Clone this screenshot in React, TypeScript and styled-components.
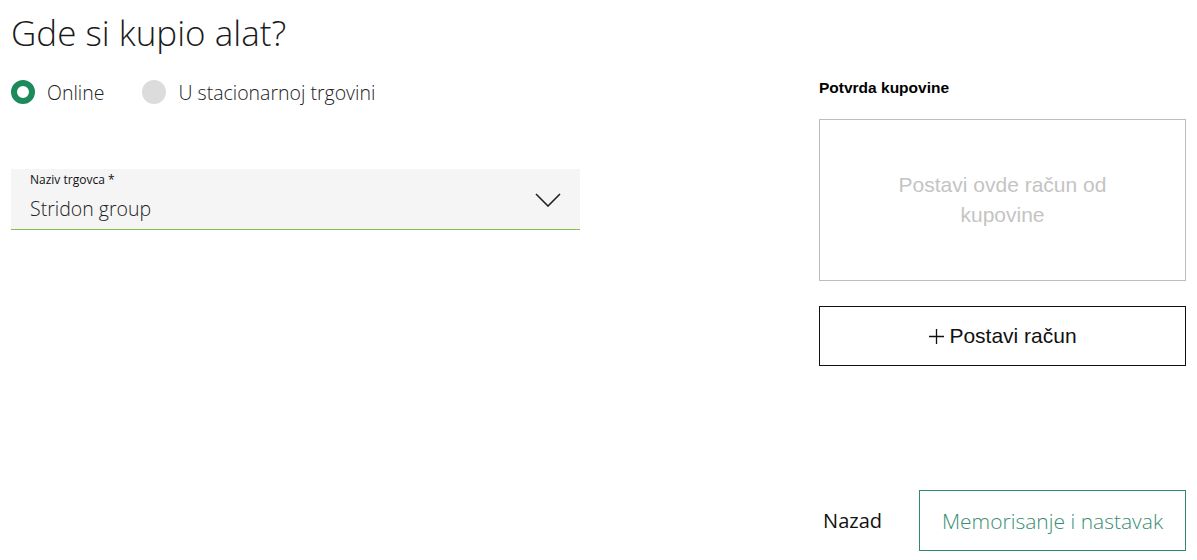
import styled, { createGlobalStyle } from 'styled-components';

const GlobalStyle = createGlobalStyle`
  html, body {
    margin: 0;
    padding: 0;
    background: #fff;
  }
  body {
    font-family: "Open Sans", "Noto Sans", sans-serif;
    color: #000;
  }
  * {
    box-sizing: border-box;
  }
`;

const Page = styled.div`
  display: flex;
  justify-content: space-between;
  height: 560px;
  padding: 0 11px 9px 11px;
`;

const LeftColumn = styled.section`
  display: flex;
  flex-direction: column;
  width: 569px;
`;

const RightColumn = styled.aside`
  display: flex;
  flex-direction: column;
  width: 367px;
  padding-top: 78px;
`;

const Title = styled.h1`
  margin: 8px 0 0 0;
  font-size: 35px;
  font-weight: 300;
  line-height: 50px;
  color: #1a1a1a;
`;

const RadioGroup = styled.div`
  display: flex;
  align-items: center;
  gap: 38px;
  margin-top: 22px;
  height: 24px;
`;

const RadioOption = styled.label`
  display: flex;
  align-items: center;
  gap: 12px;
  font-size: 19.5px;
  font-weight: 300;
  color: #222;
  cursor: pointer;
`;

const RadioDot = styled.span<{ $checked?: boolean }>`
  width: 24px;
  height: 24px;
  border-radius: 50%;
  background: ${p => (p.$checked ? '#fff' : '#dcdcdc')};
  border: ${p => (p.$checked ? '6px solid #1d8a5b' : 'none')};
`;

const Select = styled.div`
  display: flex;
  align-items: center;
  justify-content: space-between;
  margin-top: 65px;
  height: 61px;
  padding: 0 19px;
  background: #f5f5f5;
  border-bottom: 1px solid #86bf4f;
`;

const SelectText = styled.div`
  display: flex;
  flex-direction: column;
  align-self: flex-start;
  padding-top: 3px;
`;

const SelectLabel = styled.span`
  font-size: 12px;
  line-height: 16px;
  color: #111;
  margin-bottom: 8px;
`;

const SelectValue = styled.span`
  font-size: 19.5px;
  font-weight: 300;
  line-height: 26px;
  color: #222;
`;

const Chevron = styled.svg`
  width: 26px;
  height: 14px;
  margin-top: 2px;
`;

const SectionLabel = styled.div`
  font-family: "Liberation Sans", Arial, sans-serif;
  font-size: 15.5px;
  font-weight: 700;
  line-height: 20px;
`;

const DropZone = styled.div`
  display: flex;
  align-items: center;
  justify-content: center;
  margin-top: 21px;
  height: 162px;
  padding: 0 70px;
  border: 1px solid #bdbdbd;
  text-align: center;
  font-family: "Liberation Sans", Arial, sans-serif;
  font-size: 21px;
  line-height: 30px;
  color: #c4c4c4;
`;

const OutlineButton = styled.button<{ $accent?: boolean }>`
  display: flex;
  align-items: center;
  justify-content: center;
  gap: 4px;
  height: 60px;
  background: #fff;
  border: ${p => (p.$accent ? '1px solid #2f8a6c' : '1.5px solid #111')};
  color: ${p => (p.$accent ? '#3a8e74' : '#111')};
  font-family: ${p => (p.$accent ? '"Open Sans", "Noto Sans", sans-serif' : '"Liberation Sans", Arial, sans-serif')};
  font-size: ${p => (p.$accent ? '21px' : '21px')};
  font-weight: ${p => (p.$accent ? 300 : 400)};
  cursor: pointer;
`;

const UploadButton = styled(OutlineButton)`
  margin-top: 25px;
  width: 100%;
`;

const Footer = styled.div`
  display: flex;
  align-items: center;
  justify-content: flex-end;
  gap: 37px;
  margin-top: auto;
`;

const TextButton = styled.button`
  background: none;
  border: none;
  padding: 0;
  font-family: "Open Sans", "Noto Sans", sans-serif;
  font-size: 20px;
  font-weight: 400;
  color: #111;
  cursor: pointer;
`;

const NextButton = styled(OutlineButton)`
  width: 267px;
  height: 61px;
`;

const Plus = () => (
  <svg width="17" height="17" viewBox="0 0 17 17">
    <path d="M8.5 1v15M1 8.5h15" stroke="#111" strokeWidth="1.3" fill="none" />
  </svg>
);

export default function App() {
  return (
    <>
      <GlobalStyle />
      <Page>
        <LeftColumn>
          <Title>Gde si kupio alat?</Title>
          <RadioGroup>
            <RadioOption>
              <RadioDot $checked />
              Online
            </RadioOption>
            <RadioOption>
              <RadioDot />
              U stacionarnoj trgovini
            </RadioOption>
          </RadioGroup>
          <Select>
            <SelectText>
              <SelectLabel>Naziv trgovca *</SelectLabel>
              <SelectValue>Stridon group</SelectValue>
            </SelectText>
            <Chevron viewBox="0 0 26 14">
              <path d="M1 1l12 12L25 1" stroke="#222" strokeWidth="1.6" fill="none" />
            </Chevron>
          </Select>
        </LeftColumn>
        <RightColumn>
          <SectionLabel>Potvrda kupovine</SectionLabel>
          <DropZone>Postavi ovde račun od kupovine</DropZone>
          <UploadButton>
            <Plus />
            Postavi račun
          </UploadButton>
          <Footer>
            <TextButton>Nazad</TextButton>
            <NextButton $accent>Memorisanje i nastavak</NextButton>
          </Footer>
        </RightColumn>
      </Page>
    </>
  );
}
